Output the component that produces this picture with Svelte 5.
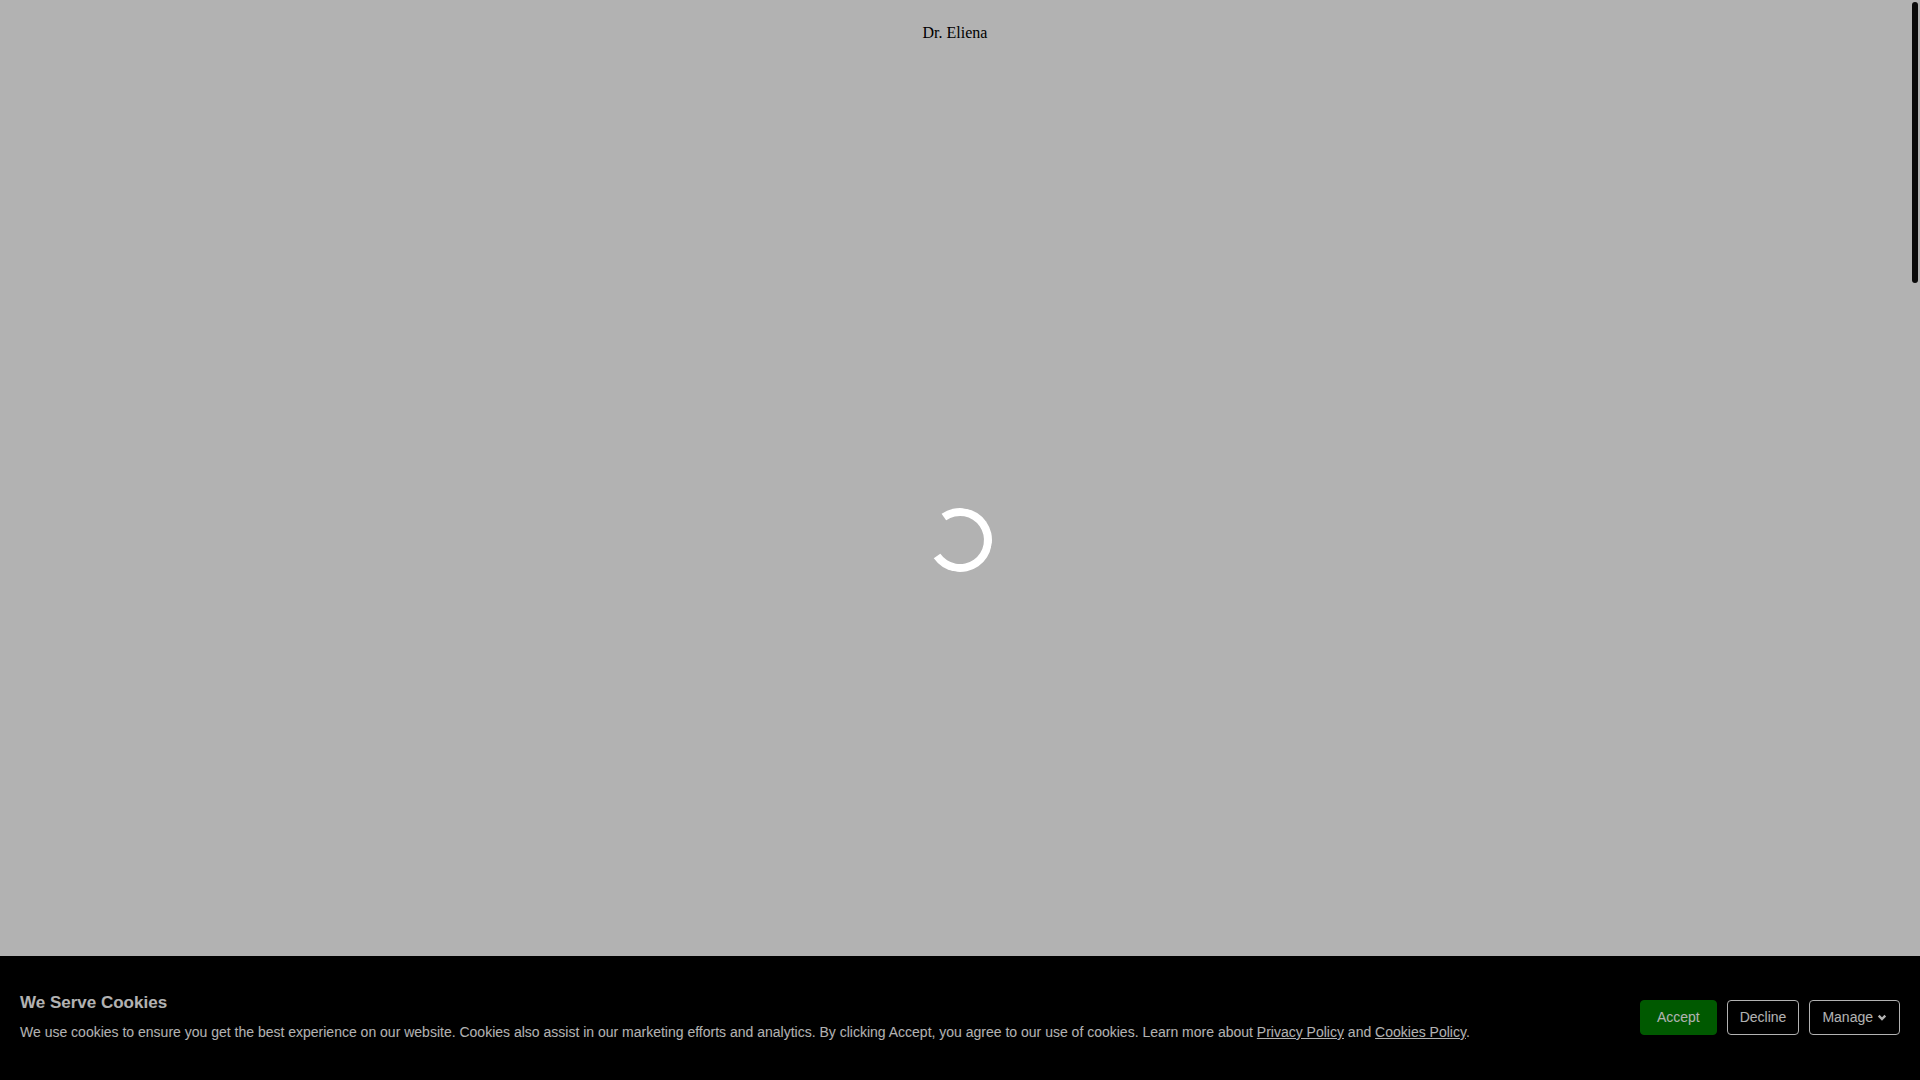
<script>
  let loading = true;
  let showCookies = true;

  function closeBanner() {
    showCookies = false;
  }
</script>

<div class="page">
  <header>Dr. Eliena</header>

  {#if showCookies}
    <section class="cookie-banner" aria-labelledby="cookie-title">
      <div class="cookie-text">
        <h2 id="cookie-title">We Serve Cookies</h2>
        <p>
          We use cookies to ensure you get the best experience on our website. Cookies also assist in our marketing efforts and analytics. By clicking Accept, you agree to our use of cookies. Learn more about <a href="/privacy-policy">Privacy Policy</a> and <a href="/cookies-policy">Cookies Policy</a>.
        </p>
      </div>
      <div class="cookie-actions">
        <button class="accept" on:click={closeBanner}>Accept</button>
        <button on:click={closeBanner}>Decline</button>
        <button>
          Manage
          <svg width="10" height="10" viewBox="0 0 10 10" aria-hidden="true">
            <path d="M1.7 3.7 L5 7 L8.3 3.7" fill="none" stroke="currentColor" stroke-width="2.4" />
          </svg>
        </button>
      </div>
    </section>
  {/if}

  {#if loading}
    <div class="overlay" role="status" aria-label="Loading">
      <div class="spinner"></div>
    </div>
  {/if}

  <div class="scroll-thumb"></div>
</div>

<style>
  :global(body) {
    margin: 0;
    background: #fff;
  }

  .page {
    min-height: 100vh;
    box-sizing: border-box;
    padding-right: 10px;
    font-family: "Liberation Serif", "Times New Roman", serif;
  }

  header {
    padding: 24px 0;
    font-size: 16px;
    line-height: 18px;
    text-align: center;
    color: #000;
  }

  .cookie-banner {
    position: fixed;
    left: 0;
    right: 0;
    bottom: 0;
    display: flex;
    align-items: center;
    justify-content: space-between;
    gap: 20px;
    padding: 32px 20px 34px;
    background: #000;
    color: #fff;
    font-family: Helvetica, "Liberation Sans", Arial, sans-serif;
    font-size: 14px;
  }

  .cookie-text h2 {
    margin: 0;
    font-size: 17px;
    line-height: 30px;
  }

  .cookie-text p {
    margin: 0;
    line-height: 28px;
  }

  .cookie-text a {
    color: inherit;
  }

  .cookie-actions {
    display: flex;
    flex-shrink: 0;
    gap: 10px;
  }

  button {
    display: flex;
    align-items: center;
    gap: 4px;
    padding: 8px 12px;
    border: 1px solid #fff;
    border-radius: 4px;
    background: transparent;
    color: #fff;
    font-family: inherit;
    font-size: 14px;
    line-height: 17px;
    cursor: pointer;
  }

  .accept {
    padding: 8px 16px;
    border-color: #008000;
    background: #008000;
  }

  .overlay {
    position: fixed;
    inset: 0;
    display: flex;
    align-items: center;
    justify-content: center;
    background: rgba(0, 0, 0, 0.3);
  }

  .spinner {
    width: 48px;
    height: 48px;
    border: 8px solid #fff;
    border-left-color: transparent;
    border-radius: 50%;
    transform: rotate(10deg);
  }

  .scroll-thumb {
    position: fixed;
    top: 2px;
    right: 2px;
    width: 6px;
    height: 26vh;
    border-radius: 3px;
    background: #0a0a0a;
  }
</style>
